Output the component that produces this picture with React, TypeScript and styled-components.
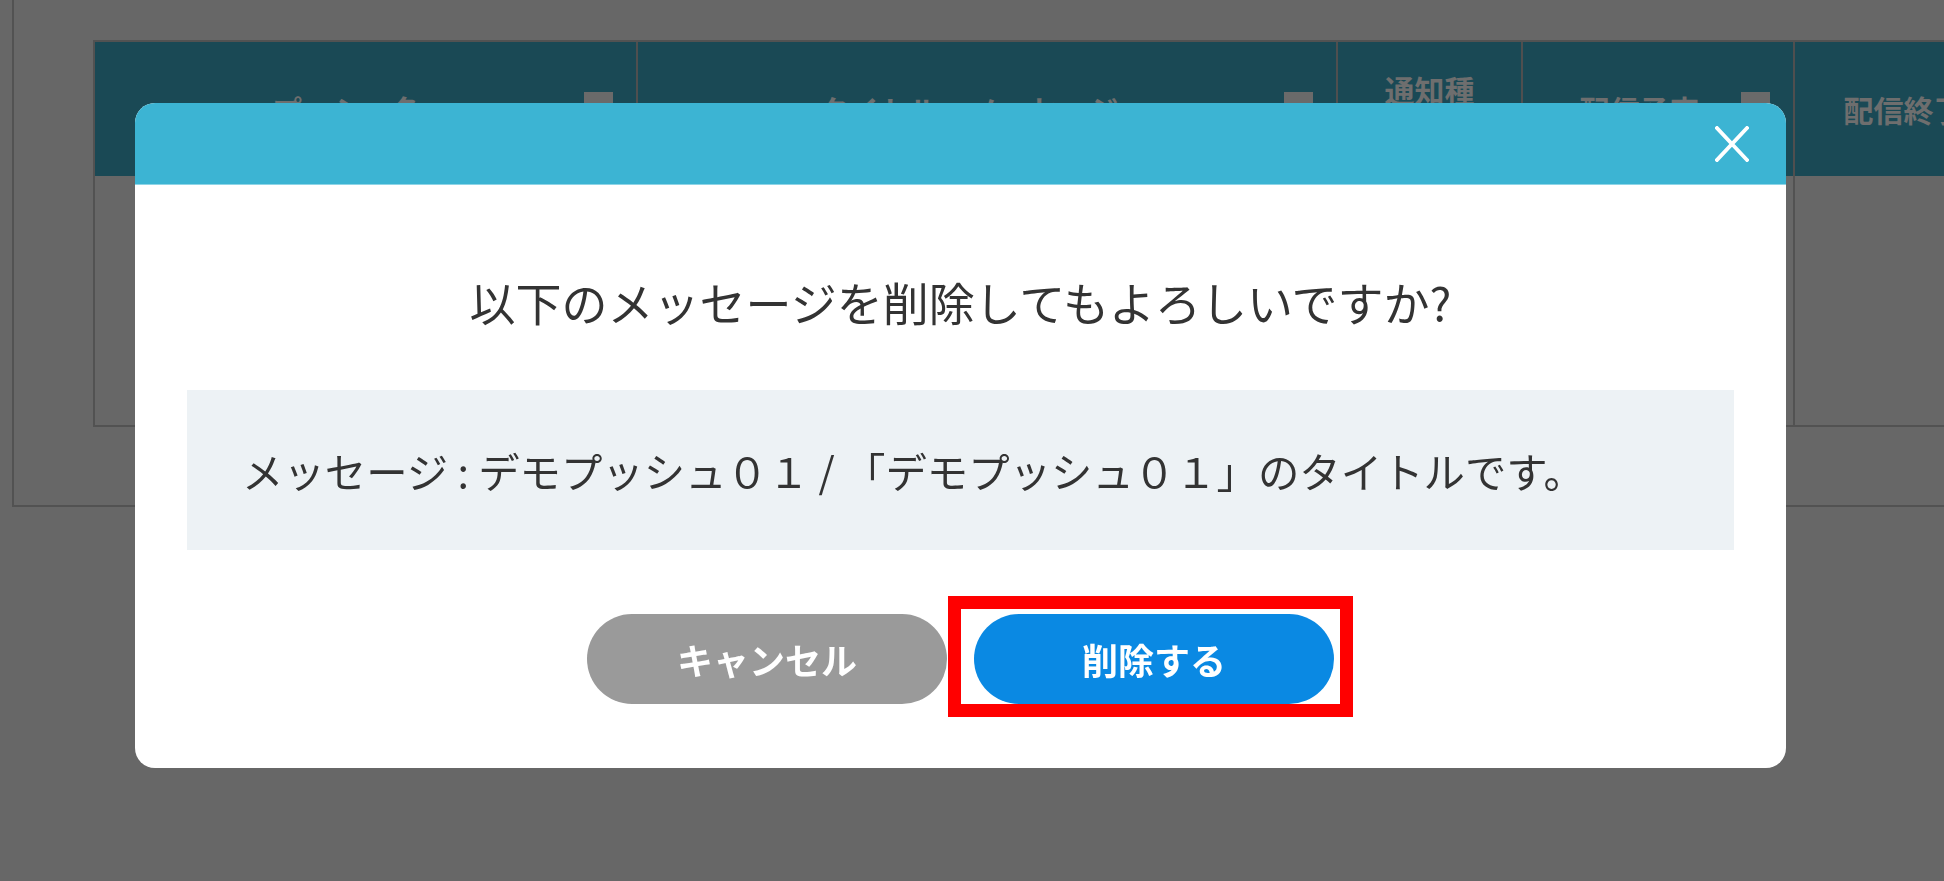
import React from "react";
import styled, { createGlobalStyle } from "styled-components";

const GlobalStyle = createGlobalStyle`
  html, body {
    margin: 0;
    padding: 0;
    background: #676767;
    overflow: hidden;
    font-family: "Noto Sans CJK JP", "Noto Sans", sans-serif;
  }
  * { box-sizing: border-box; }
`;

const Page = styled.div`
  width: 100vw;
  height: 100vh;
  background: #676767;
  overflow: hidden;
`;

const Panel = styled.div`
  margin-left: 12px;
  width: 2400px;
  border-left: 2px solid #525252;
  border-bottom: 2px solid #525252;
  padding: 40px 0 78px 79px;
`;

const Table = styled.div`
  display: grid;
  grid-template-columns: 543px 700px 185px 272px 256px;
  grid-template-rows: 134px 249px;
  width: max-content;
  border-left: 2px solid #525252;
  border-top: 2px solid #525252;
  border-bottom: 2px solid #525252;
`;

const HeadCell = styled.div`
  display: flex;
  align-items: center;
  gap: 8px;
  padding: 0 23px;
  background: #1a4955;
  border-right: 2px solid #4f4f4f;
  color: #6e6e6e;
  font-weight: 700;
  font-size: 30px;
  line-height: 40px;
  overflow: hidden;
`;

const HeadLabel = styled.span<{ $narrow?: boolean }>`
  flex: 1;
  text-align: center;
  ${(p) => (p.$narrow ? "max-width: 3em; margin: 0 auto;" : "white-space: nowrap;")}
`;

const SortMark = styled.span`
  width: 29px;
  height: 34px;
  background: #6a6a6a;
  flex: none;
`;

const BodyCell = styled.div`
  background: #676767;
  border-right: 2px solid #525252;
`;

const Overlay = styled.div`
  position: fixed;
  inset: 0;
  display: flex;
  justify-content: center;
  align-items: flex-start;
  padding: 103px 23px 0 0;
`;

const Dialog = styled.div`
  width: 1651px;
  background: #ffffff;
  border-radius: 20px;
  overflow: hidden;
  display: flex;
  flex-direction: column;
`;

const DialogHeader = styled.div`
  height: 82px;
  background: #3cb4d3;
  border-bottom: 1px solid #8ed5e7;
  display: flex;
  justify-content: flex-end;
  align-items: center;
  padding-right: 37px;
`;

const CloseButton = styled.button`
  width: 34px;
  height: 36px;
  padding: 0;
  border: none;
  background: transparent;
  display: flex;
  cursor: pointer;
`;

const DialogBody = styled.div`
  padding: 82px 52px 64px;
  display: flex;
  flex-direction: column;
`;

const Title = styled.p`
  margin: 0 0 54px;
  text-align: center;
  font-size: 46px;
  line-height: 69px;
  color: #333333;
  font-weight: 400;
`;

const MessageBox = styled.div`
  height: 160px;
  background: #edf2f5;
  padding-left: 55px;
  display: flex;
  align-items: center;
  font-size: 41.4px;
  color: #333333;
  white-space: nowrap;
`;

const ButtonRow = styled.div`
  margin-top: 64px;
  display: flex;
  justify-content: center;
  gap: 27px;
`;

const PillButton = styled.button<{ $variant: "cancel" | "danger" }>`
  width: 360px;
  height: 90px;
  border: none;
  border-radius: 45px;
  background: ${(p) => (p.$variant === "cancel" ? "#9a9a9a" : "#0a89e3")};
  color: #ffffff;
  font-family: "Noto Sans CJK JP", sans-serif;
  font-weight: 700;
  font-size: 36px;
  cursor: pointer;
`;

const Highlighted = styled.div`
  position: relative;
  display: flex;
`;

const RedFrame = styled.span`
  position: absolute;
  left: -26px;
  top: -18px;
  right: -19px;
  bottom: -13px;
  border: 13px solid #ff0000;
  pointer-events: none;
`;

const columns = [
  { label: "プッシュ名", sortable: true },
  { label: "タイトル・メッセージ", sortable: true },
  { label: "通知種別", sortable: false, narrow: true },
  { label: "配信予定", sortable: true },
  { label: "配信終了", sortable: true },
];

export default function App() {
  return (
    <>
      <GlobalStyle />
      <Page>
        <Panel>
          <Table>
            {columns.map((c) => (
              <HeadCell key={c.label}>
                <HeadLabel $narrow={c.narrow}>{c.label}</HeadLabel>
                {c.sortable && <SortMark />}
              </HeadCell>
            ))}
            {columns.map((c) => (
              <BodyCell key={"b" + c.label} />
            ))}
          </Table>
        </Panel>
      </Page>
      <Overlay>
        <Dialog role="dialog">
          <DialogHeader>
            <CloseButton aria-label="閉じる">
              <svg width="34" height="36" viewBox="0 0 34 36">
                <path d="M2 2 L32 34 M32 2 L2 34" stroke="#ffffff" strokeWidth="3.8" strokeLinecap="square" fill="none" />
              </svg>
            </CloseButton>
          </DialogHeader>
          <DialogBody>
            <Title>以下のメッセージを削除してもよろしいですか?</Title>
            <MessageBox>メッセージ : デモプッシュ０１ / 「デモプッシュ０１」のタイトルです。</MessageBox>
            <ButtonRow>
              <PillButton $variant="cancel">キャンセル</PillButton>
              <Highlighted>
                <PillButton $variant="danger">削除する</PillButton>
                <RedFrame />
              </Highlighted>
            </ButtonRow>
          </DialogBody>
        </Dialog>
      </Overlay>
    </>
  );
}
